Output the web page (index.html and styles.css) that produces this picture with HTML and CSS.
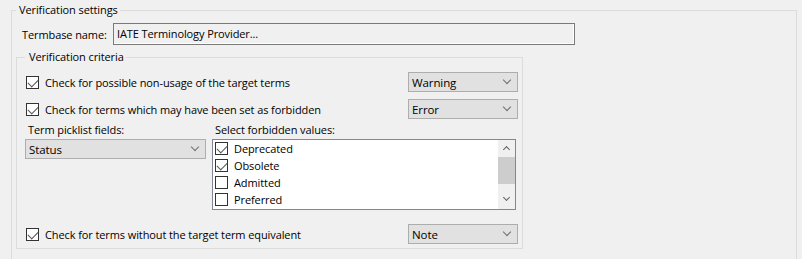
FILE: index.html
```html
<!DOCTYPE html>
<html lang="en">
<head>
  <meta charset="UTF-8">
  <title>Verification settings</title>
  <link rel="stylesheet" href="styles.css">
</head>
<body>
  <fieldset class="group outer">
    <legend>Verification settings</legend>

    <div class="termbase-row">
      <label class="termbase-label">Termbase name:</label>
      <div class="textbox">IATE Terminology Provider...</div>
    </div>

    <fieldset class="group inner">
      <legend>Verification criteria</legend>

      <div class="check-row">
        <label class="check"><span class="box checked"></span>Check for possible non-usage of the target terms</label>
        <div class="combo"><span>Warning</span><span class="chev"></span></div>
      </div>

      <div class="check-row second">
        <label class="check"><span class="box checked"></span>Check for terms which may have been set as forbidden</label>
        <div class="combo"><span>Error</span><span class="chev"></span></div>
      </div>

      <div class="picklist">
        <div class="pick-col">
          <div class="caption">Term picklist fields:</div>
          <div class="combo wide"><span>Status</span><span class="chev"></span></div>
        </div>
        <div class="values-col">
          <div class="caption">Select forbidden values:</div>
          <div class="listbox">
            <ul class="items">
              <li><span class="box checked"></span>Deprecated</li>
              <li><span class="box checked"></span>Obsolete</li>
              <li><span class="box"></span>Admitted</li>
              <li><span class="box"></span>Preferred</li>
            </ul>
            <div class="scrollbar">
              <span class="arrow up"></span>
              <span class="thumb"></span>
              <span class="arrow down"></span>
            </div>
          </div>
        </div>
      </div>

      <div class="check-row last">
        <label class="check"><span class="box checked"></span>Check for terms without the target term equivalent</label>
        <div class="combo"><span>Note</span><span class="chev"></span></div>
      </div>
    </fieldset>
  </fieldset>
</body>
</html>
```

FILE: styles.css
```css
html, body {
  height: 259px;
  overflow: hidden;
}

body {
  margin: 0;
  background-color: #f0f0f0;
  font-family: "Open Sans", "Noto Sans", sans-serif;
  font-size: 11px;
  letter-spacing: -0.1px;
  color: #000;
}

.group {
  border: 1px solid #dcdcdc;
  margin: 0;
  min-width: 0;
}

.group legend {
  line-height: 16px;
  height: 16px;
}

/* open at the bottom: the dialog continues below the screenshot */
.outer {
  box-sizing: border-box;
  height: 257px;
  border-bottom: none;
  margin: 2px 5px 0 11px;
  padding: 5px 4px 0 4px;
}

.outer > legend {
  padding: 0 2px 0 3px;
}

.termbase-row {
  display: flex;
  align-items: center;
  height: 22px;
  padding-left: 6px;
}

.termbase-label {
  width: 91px;
  flex-shrink: 0;
  white-space: nowrap;
}

.textbox {
  width: 457px;
  height: 20px;
  line-height: 19px;
  border: 1px solid #7a7a7a;
  box-shadow: inset -1px -1px 0 #fff;
  padding-left: 3px;
}

.inner {
  width: 493px;
  margin-top: 4px;
  padding: 7px 4px 4px 8px;
}

.inner > legend {
  padding: 0 2px 0 4px;
}

.check-row {
  display: flex;
  align-items: center;
  justify-content: space-between;
  height: 20px;
}

.check-row.second {
  margin-top: 7px;
}

.check-row.last {
  margin-top: 14px;
}

.check {
  display: flex;
  align-items: center;
  padding-left: 1px;
}

.box {
  width: 11px;
  height: 11px;
  border: 1px solid #333;
  background-color: #fff;
  margin-right: 6px;
  flex-shrink: 0;
  position: relative;
}

.box.checked::after {
  content: "";
  position: absolute;
  left: 1px;
  top: 1px;
  width: 9px;
  height: 5px;
  border-left: 1px solid #555;
  border-bottom: 1px solid #555;
  transform: translate(0, 1px) rotate(-45deg) scaleX(0.95);
  transform-origin: 50% 50%;
}

.combo {
  height: 18px;
  border: 1px solid #adadad;
  background-color: #e1e1e1;
  display: flex;
  align-items: center;
  justify-content: space-between;
  padding: 0 7px 0 3px;
  box-sizing: content-box;
  width: 98px;
  font-size: 11.5px;
}

.combo.wide {
  width: 169px;
}

.chev {
  width: 5px;
  height: 5px;
  border-right: 1px solid #707070;
  border-bottom: 1px solid #707070;
  transform: rotate(45deg);
  margin-top: -4px;
}

.picklist {
  display: flex;
  margin-top: 3px;
}

.caption {
  height: 17px;
  line-height: 16px;
  padding-left: 3px;
}

.pick-col {
  width: 187px;
}

.listbox {
  width: 302px;
  height: 69px;
  border: 1px solid #828790;
  background-color: #fff;
  display: flex;
  justify-content: space-between;
}

.items {
  list-style: none;
  margin: 0;
  padding: 0 0 0 2px;
}

.items li {
  display: flex;
  align-items: center;
  height: 17px;
}

.scrollbar {
  width: 17px;
  background-color: #f0f0f0;
  display: flex;
  flex-direction: column;
  align-items: center;
}

.arrow {
  width: 4px;
  height: 4px;
  border-left: 1.5px solid #606060;
  border-top: 1.5px solid #606060;
  transform: rotate(45deg);
}

.arrow.up {
  margin-top: 7px;
}

.arrow.down {
  transform: rotate(225deg);
  margin-top: 11px;
}

.thumb {
  width: 17px;
  height: 27px;
  background-color: #cdcdcd;
  margin-top: 5px;
}
```
